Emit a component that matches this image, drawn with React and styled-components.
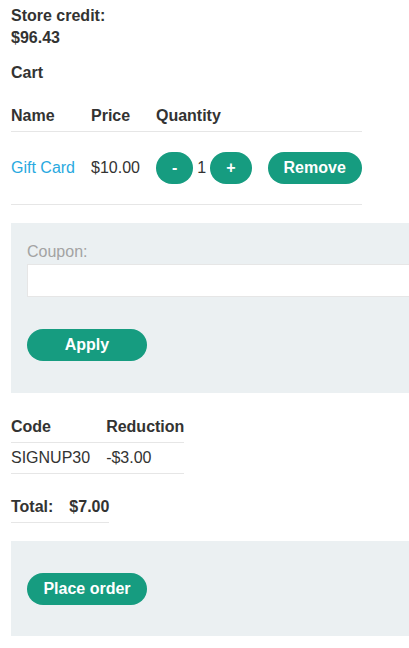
import React, { useState } from "react";
import styled, { createGlobalStyle } from "styled-components";

const COLOR_TEXT = "#333332";
const COLOR_GREEN = "#169c80";
const COLOR_LINK = "#29a9e0";
const COLOR_BORDER = "#e6e6e6";
const COLOR_PANEL = "#ebf0f2";

const GlobalStyle = createGlobalStyle`
  html, body {
    margin: 0;
    padding: 0;
    background: #fff;
  }
  body {
    font-family: "Liberation Sans", Arial, sans-serif;
    font-size: 16px;
    line-height: 22px;
    color: ${COLOR_TEXT};
  }
`;

const Page = styled.div`
  padding: 5px 0 12px 11px;
`;

const Credit = styled.p`
  margin: 0;
  font-weight: bold;
  width: 120px;
`;

const Heading = styled.p`
  margin: 13px 0 16px;
  font-weight: bold;
`;

const Table = styled.table`
  border-collapse: collapse;
  border-spacing: 0;
`;

const Th = styled.th`
  text-align: left;
  font-weight: bold;
  padding: 5px 16px 4px 0;
  border-bottom: 1px solid ${COLOR_BORDER};
  white-space: nowrap;
  &:last-child {
    padding-right: 0;
  }
`;

const Td = styled.td`
  text-align: left;
  vertical-align: middle;
  padding: ${(props) => (props.$tall ? "20px 16px 20px 0" : "4px 16px 4px 0")};
  border-bottom: 1px solid ${COLOR_BORDER};
  white-space: nowrap;
  font-weight: ${(props) => (props.$bold ? "bold" : "normal")};
  &:last-child {
    padding-right: 0;
  }
`;

const ItemLink = styled.a`
  color: ${COLOR_LINK};
  text-decoration: none;
`;

const Quantity = styled.div`
  display: flex;
  align-items: center;
  gap: 4px;
`;

const Button = styled.button`
  display: inline-flex;
  align-items: center;
  justify-content: center;
  height: 32px;
  min-width: ${(props) => (props.$wide ? "120px" : "0")};
  padding: 0 16px;
  border: none;
  border-radius: 16px;
  background: ${COLOR_GREEN};
  color: #fff;
  font-family: "Liberation Sans", Arial, sans-serif;
  font-size: 16px;
  font-weight: bold;
  cursor: pointer;
`;

const Panel = styled.form`
  margin: 18px 0 ${(props) => (props.$compact ? "0" : "18px")};
  overflow: hidden;
  background: ${COLOR_PANEL};
  padding: ${(props) => (props.$compact ? "32px 0 31px 16px" : "18px 0 32px 16px")};
`;

const Label = styled.label`
  display: block;
  color: #a3a3a3;
  margin-bottom: 1px;
`;

const Input = styled.input`
  display: block;
  box-sizing: border-box;
  width: calc(100% + 20px);
  height: 33px;
  margin: 0 0 32px;
  border: 1px solid ${COLOR_BORDER};
  background: #fff;
  font-size: 16px;
`;

const Spacer = styled.div`
  height: 18px;
`;

export default function App() {
  const [qty, setQty] = useState(1);

  return (
    <Page>
      <GlobalStyle />
      <Credit>Store credit: $96.43</Credit>
      <Heading>Cart</Heading>
      <Table>
        <thead>
          <tr>
            <Th>Name</Th>
            <Th>Price</Th>
            <Th>Quantity</Th>
            <Th></Th>
          </tr>
        </thead>
        <tbody>
          <tr>
            <Td $tall>
              <ItemLink href="#">Gift Card</ItemLink>
            </Td>
            <Td $tall>$10.00</Td>
            <Td $tall>
              <Quantity>
                <Button type="button" onClick={() => setQty(Math.max(0, qty - 1))}>
                  -
                </Button>
                {qty}
                <Button type="button" onClick={() => setQty(qty + 1)}>
                  +
                </Button>
              </Quantity>
            </Td>
            <Td $tall>
              <Button type="button">Remove</Button>
            </Td>
          </tr>
        </tbody>
      </Table>

      <Panel onSubmit={(e) => e.preventDefault()}>
        <Label htmlFor="coupon">Coupon:</Label>
        <Input id="coupon" type="text" />
        <Button $wide type="submit">
          Apply
        </Button>
      </Panel>

      <Table>
        <thead>
          <tr>
            <Th>Code</Th>
            <Th>Reduction</Th>
          </tr>
        </thead>
        <tbody>
          <tr>
            <Td>SIGNUP30</Td>
            <Td>-$3.00</Td>
          </tr>
        </tbody>
      </Table>
      <Spacer />
      <Table>
        <tbody>
          <tr>
            <Td $bold>Total:</Td>
            <Td $bold>$7.00</Td>
          </tr>
        </tbody>
      </Table>

      <Panel $compact onSubmit={(e) => e.preventDefault()}>
        <Button $wide type="submit">
          Place order
        </Button>
      </Panel>
    </Page>
  );
}
